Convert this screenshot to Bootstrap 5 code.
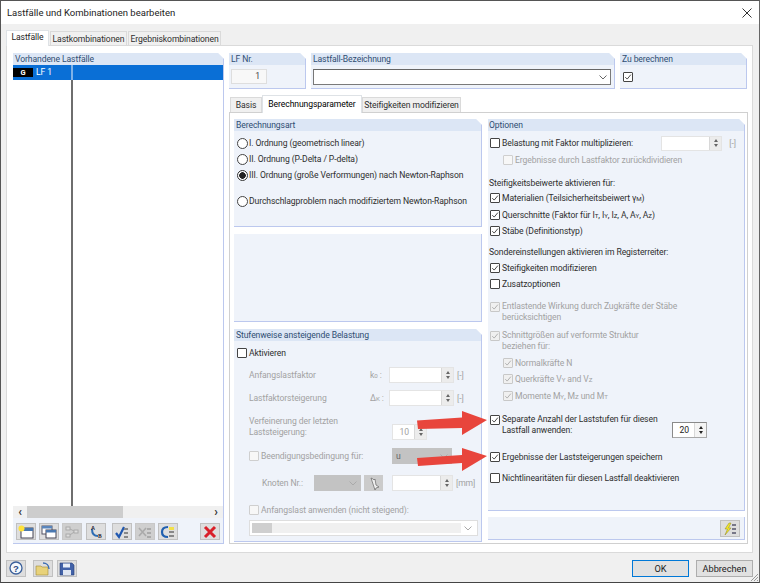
<!DOCTYPE html>
<html lang="de">
<head>
<meta charset="utf-8">
<title>Lastfälle und Kombinationen bearbeiten</title>
<link rel="stylesheet" href="https://cdn.jsdelivr.net/npm/bootstrap@5.3.0/dist/css/bootstrap.min.css">
<style>
html,body{margin:0;padding:0;background:#f0f0f0}
body{font-family:Roboto,"Liberation Sans",sans-serif;font-size:8.6px;letter-spacing:-.1px;line-height:11px;color:#2e2e2e}
.dlg{width:760px;height:583px;border:1px solid #555;border-right-color:#666;border-bottom-color:#444;background:#f0f0f0;overflow:hidden}
.ttl{height:23px;background:#fff;padding:0 7px 0 6px;font-size:9.5px;letter-spacing:0;color:#222}
.bodyw{padding:6px 0 0 5px}
.otabs{border:0;height:15px;gap:1px}
.otabs .nav-link{font-size:8.6px;line-height:11px;color:#2e2e2e;background:#f0f0f0;border:1px solid #dadada;border-bottom:0;border-radius:0;padding:2px 0 0;height:14px;margin-top:1px;white-space:nowrap;text-align:center}
.otabs .nav-link.active{background:#fff;margin-top:0;height:16px;padding:1px 0 0;position:relative;z-index:2;color:#222}
.ot1{width:43px}.ot2{width:77px}.ot3{width:93px}
.opanel{width:747px;height:508px;background:#fff;border:1px solid #dadada;padding:7px 0 0 6px}
.grp{background:#eff3fa;border-right:1px solid #bcc8ee;border-bottom:1px solid #bcc8ee;clip-path:polygon(0 0,calc(100% - 6px) 0,100% 6px,100% 100%,0 100%)}
.grph{background:#dce6f5;height:12px;line-height:12px;padding-left:2px;color:#2f4d72;white-space:nowrap;font-size:8.6px}
.go>.grph{padding-left:1px}
.lgrp{width:211px;height:491px}
.rcol{width:519px;margin-left:5px}
.topr{height:36px;gap:5px}
.g1{width:77px}.g2{width:304px}.g3{width:127px}
.inp1{width:36px;height:15px;margin:4px 0 0 2px;background:#f8f8f8;border:1px solid #dedede;text-align:right;padding:1px 6px;line-height:11px;color:#444}
.cmb{width:298px;height:16px;margin:4px 0 0 2px;background:#fff;border:1px solid #7a7a7a;border-top-color:#666;border-left-color:#777;padding-right:3px}
.zchk{margin:7px 0 0 3px}
.itabs{border:0;height:17px;margin-top:6px;padding-left:1px}
.itabs .nav-link{color:#2e2e2e;background:#f0f0f0;border:1px solid #dadada;border-bottom:0;border-radius:0;padding:2px 0 0;margin-top:2px;height:15px;font-size:8.6px;line-height:11px;white-space:nowrap;text-align:center}
.itabs .nav-link.active{background:#fff;margin-top:0;height:18px;padding:3px 0 0;position:relative;z-index:2}
.it1{width:32px}.it2{width:100px}.it3{width:99px}
.ipanel{width:519px;height:432px;background:#fff;border:1px solid #d0d0d0;padding:6px 0 0 4px}
.lcol{width:248px}
.ropt{width:257px;margin-left:6px}
.gb{height:108px}.ge{height:88px;margin-top:7px;clip-path:none}.gs{height:213px;margin-top:7px}
.go{height:392px}.gx{height:23px;margin-top:6px;clip-path:none;padding:3px 1px 0 0}
.rw{height:14px;padding-left:3px;white-space:nowrap}
.rd{height:16px;padding-left:15px;white-space:nowrap}
.dbl{height:24px;padding-left:3px;white-space:nowrap}
.go .rw,.go .dbl{padding-left:2px}
.go .rw.ind{padding-left:15px}
.t1{margin-top:1px}.t2{margin-top:2px}.t3{margin-top:3px}.t5{margin-top:5px}.t7{margin-top:7px}.t8{margin-top:8px}.t9{margin-top:9px}.t10{margin-top:10px}.t11{margin-top:11px}.t12{margin-top:12px}
.ind{padding-left:15px}
.go .rw.lbx{padding-left:1px}
.dis{color:#a2a2a2}
.form-check-input.bx{width:10px;height:10px;margin:0 2px 0 0;flex:none;float:none;background-color:#fff;border:1px solid #444;border-radius:1px;opacity:1;box-shadow:none}
.form-check-input.bx:checked[type=checkbox]{background-color:#fff;border-color:#444;background-size:100% 100%;background-image:url("data:image/svg+xml,%3Csvg xmlns='http://www.w3.org/2000/svg' viewBox='0 0 10 10'%3E%3Cpath d='M1.6 5.2 4 7.6 8.6 2' fill='none' stroke='%23333' stroke-width='1.1'/%3E%3C/svg%3E")}
.form-check-input.bx:disabled{border-color:#cfcfcf;background-color:#f7f7f7}
.form-check-input.bx:disabled:checked[type=checkbox]{border-color:#c8c8c8;background-color:#f0f0f0;background-image:url("data:image/svg+xml,%3Csvg xmlns='http://www.w3.org/2000/svg' viewBox='0 0 10 10'%3E%3Cpath d='M1.6 5.2 4 7.6 8.6 2' fill='none' stroke='%23a8a8a8' stroke-width='1.1'/%3E%3C/svg%3E")}
.form-check-input.chktop{margin-top:1px}
.form-check-input.rb{width:11px;height:11px;margin:0 1px 0 0;flex:none;background-color:#fff;border:1px solid #444;box-shadow:none}
.form-check-input.rb:checked[type=radio]{background-color:#fff;border-color:#333;background-image:radial-gradient(circle,#222 0 3px,transparent 3.6px)}
.sp{height:16px;background:#fff;border:1px solid #e4e4e4;flex:none}
.spv{flex:1 1 auto;text-align:right;line-height:14px;padding-right:5px}
.spa{width:12px;background:#ececec;border-left:1px solid #d8d8d8;justify-content:center;gap:2px}
.spa i{display:block;width:0;height:0;margin:0 auto;border-left:2.5px solid transparent;border-right:2.5px solid transparent}
.spa i.up{border-bottom:3px solid #666}
.spa i.dn{border-top:3px solid #666}
.sp.act{border:1px solid #a8a8a8;border-top-color:#8a8a8a;border-left-color:#8a8a8a;color:#222}
.sp.act .spa{background:#f4f4f4}
.sp.act .spa i.up{border-bottom-color:#222}.sp.act .spa i.dn{border-top-color:#222}
.spend{margin-right:37px}
.w65{width:65px}.w61{width:61px}.w35{width:35px}
.s15{height:15px}
.lb1{width:121px}.lb2{width:19px}
.u{margin-left:3px}
.uend{margin-left:7px;margin-right:8px}
.vf{white-space:normal;width:143px;line-height:10.5px}
.bdg{width:131px}
.knl{margin-left:13px;width:52px}
.gcm{background:#c3c3c3;height:16px;width:60px;padding:0 4px;color:#666;flex:none}
.gcm2{width:47px;justify-content:flex-end}
.gbtn{width:19px;height:16px;background:#cbcbcb;margin:0 9px 0 3px;flex:none}
.wcmb{width:229px;height:16px;background:#fff;border:1px solid #dedede;margin-left:15px;padding:2px}
.wfill{flex:1 1 auto;background:#f0f0f0;height:100%}
.wfill b{display:block;width:20px;height:100%;background:#cfcfcf}
.wch{width:14px;flex:none}
.lst{height:441px;background:#fff}
.lc1{width:60px;border-right:2px solid #6e6e6e;flex:none}
.lc2{flex:1 1 auto}
.sel{height:15px;background:#0a6fd6;color:#fff}
.lc1 .sel{margin-right:-2px;border-right:2px solid #7fb2e8;width:60px}
.gtag{width:20px;height:9px;background:#000;color:#fff;text-align:center;line-height:9px;font-size:7.5px;font-weight:700;margin-right:3px;flex:none}
.sbar{height:12px;background:#f0f0f0}
.sarr{width:14px;text-align:center;flex:none;font-weight:700;font-size:12px;color:#333;line-height:10px}
.thumb{width:96px;height:100%;background:#cdcdcd;flex:none}
.tbar{height:24px;padding:5px 0 0 3px}
.tb{width:20px;height:17px;background:#dedede;border:1px solid #c0c0c0;padding:0;margin-right:3px;flex:none;display:flex;align-items:center;justify-content:center;border-radius:0}
.tb.off{background:#cfcfcf;border-color:#c8c8c8}
.m1{margin-left:1px}.m3{margin-left:3px}
.fb2{margin-left:4px}.fb3{margin-left:1px}
.fbar{height:29px;padding:7px 6px 0 0}
.ok{width:57px;height:17px;background:#e1e1e1;border:1.5px solid #0078d7;border-radius:0;padding:0;font-size:9.2px;line-height:13px;color:#222}
.ab{width:57px;height:17px;background:#e1e1e1;border:1px solid #adadad;border-radius:0;padding:0;font-size:9.2px;line-height:14px;color:#222;margin-left:7px}
.ovl{position:absolute;left:0;top:0;pointer-events:none;z-index:5}
.grip{position:absolute;right:0;bottom:0}
.lmr{margin-right:3px}
sub.sb{font-size:72%;bottom:-.1em;text-transform:uppercase}
</style>
</head>
<body>
<div class="dlg d-flex flex-column position-relative">
  <div class="ttl d-flex align-items-center justify-content-between">
    <span>Lastfälle und Kombinationen bearbeiten</span>
    <svg width="10" height="10" viewBox="0 0 10 10"><path d="M.5.5l9 9M9.5.5l-9 9" stroke="#333" stroke-width="1"/></svg>
  </div>
  <div class="bodyw flex-grow-1">
    <ul class="nav nav-tabs otabs">
      <li class="nav-item"><a class="nav-link active ot1" href="#">Lastfälle</a></li>
      <li class="nav-item"><a class="nav-link ot2" href="#">Lastkombinationen</a></li>
      <li class="nav-item"><a class="nav-link ot3" href="#">Ergebniskombinationen</a></li>
    </ul>
    <div class="opanel d-flex">
      <div class="grp lgrp d-flex flex-column">
        <div class="grph">Vorhandene Lastfälle</div>
        <div class="lst d-flex">
          <div class="lc1"><div class="sel d-flex align-items-center"><span class="gtag">G</span>LF 1</div></div>
          <div class="lc2"><div class="sel"></div></div>
        </div>
        <div class="sbar d-flex align-items-center">
          <div class="sarr">‹</div><div class="thumb"></div><div class="flex-grow-1"></div><div class="sarr">›</div>
        </div>
        <div class="tbar d-flex">
          <button class="tb" type="button"><svg width="16" height="14" viewBox="0 0 16 14"><rect x="3" y="3" width="12" height="10" fill="#fff" stroke="#445"/><rect x="3" y="3" width="12" height="3" fill="#4a78b0"/><circle cx="3.5" cy="3.5" r="3" fill="#ffe23a"/></svg></button>
          <button class="tb" type="button"><svg width="16" height="14" viewBox="0 0 16 14"><rect x="1" y="1" width="10" height="8" fill="#fff" stroke="#556"/><rect x="1" y="1" width="10" height="2.5" fill="#5a86bc"/><rect x="5" y="5" width="10" height="8" fill="#fff" stroke="#445"/><rect x="5" y="5" width="10" height="2.5" fill="#4a78b0"/></svg></button>
          <button class="tb off" type="button"><svg width="16" height="14" viewBox="0 0 16 14"><g fill="#ddd" stroke="#aaa"><rect x="2" y="2" width="4" height="3"/><rect x="2" y="9" width="4" height="3"/><rect x="10" y="5" width="4" height="3"/></g><path d="M6 4l4 2M6 10l4-3" stroke="#aaa" fill="none"/></svg></button>
          <button class="tb m1" type="button"><svg width="16" height="14" viewBox="0 0 16 14"><path d="M4 4c0 5 2 7 6 7" fill="none" stroke="#2c6cb4" stroke-width="2"/><text x="3" y="5" font-size="5.500" font-family="Liberation Sans" font-weight="700" fill="#223">A</text><text x="10" y="13" font-size="5.500" font-family="Liberation Serif" font-weight="700" fill="#223">B</text></svg></button>
          <button class="tb m3" type="button"><svg width="16" height="14" viewBox="0 0 16 14"><path d="M2 8l3 4 5-10" fill="none" stroke="#2058b0" stroke-width="2.2"/><path d="M10 3h4v2h-4zM10 7h4v2h-4zM10 11h4v2h-4z" fill="#888"/></svg></button>
          <button class="tb off" type="button"><svg width="16" height="14" viewBox="0 0 16 14"><path d="M2 3l7 8M9 3l-7 8" stroke="#aaa" stroke-width="1.6"/><path d="M10 3h4v2h-4zM10 7h4v2h-4zM10 11h4v2h-4z" fill="#aaa"/></svg></button>
          <button class="tb" type="button"><svg width="16" height="14" viewBox="0 0 16 14"><path d="M8 2C3 2 2 5 2 7s1 5 6 5" fill="none" stroke="#2060b0" stroke-width="2.2"/><path d="M9 2h5v3H9z" fill="#f2e14a"/><path d="M9 6h5v2H9zM9 10h5v2H9z" fill="#888"/></svg></button>
          <button class="tb ms-auto lmr" type="button"><svg width="16" height="14" viewBox="0 0 16 14"><path d="M3 2l10 10M13 2L3 12" stroke="#d9202a" stroke-width="3"/></svg></button>
        </div>
      </div>
      <div class="rcol">
        <div class="topr d-flex">
          <div class="grp g1"><div class="grph">LF Nr.</div><div class="inp1">1</div></div>
          <div class="grp g2"><div class="grph">Lastfall-Bezeichnung</div>
            <div class="cmb d-flex align-items-center justify-content-end"><svg width="8" height="5" viewBox="0 0 8 5"><path d="M.5.5 4 4 7.500.5" fill="none" stroke="#666"/></svg></div></div>
          <div class="grp g3"><div class="grph">Zu berechnen</div><div class="zchk d-flex"><input class="form-check-input bx" type="checkbox" checked aria-label="Zu berechnen"></div></div>
        </div>
        <ul class="nav nav-tabs itabs">
          <li class="nav-item"><a class="nav-link it1" href="#">Basis</a></li>
          <li class="nav-item"><a class="nav-link active it2" href="#">Berechnungsparameter</a></li>
          <li class="nav-item"><a class="nav-link it3" href="#">Steifigkeiten modifizieren</a></li>
        </ul>
        <div class="ipanel d-flex">
          <div class="lcol">
            <div class="grp gb">
              <div class="grph">Berechnungsart</div>
              <div class="rw t5 d-flex align-items-center"><input class="form-check-input rb" type="radio" name="art" aria-label="I"><span>I. Ordnung (geometrisch linear)</span></div>
              <div class="rw t2 d-flex align-items-center"><input class="form-check-input rb" type="radio" name="art" aria-label="II"><span>II. Ordnung (P-Delta / P-delta)</span></div>
              <div class="rw t2 d-flex align-items-center"><input class="form-check-input rb" type="radio" name="art" checked aria-label="III"><span>III. Ordnung (große Verformungen) nach Newton-Raphson</span></div>
              <div class="rw t12 d-flex align-items-center"><input class="form-check-input rb" type="radio" name="art" aria-label="D"><span>Durchschlagproblem nach modifiziertem Newton-Raphson</span></div>
            </div>
            <div class="grp ge"></div>
            <div class="grp gs">
              <div class="grph">Stufenweise ansteigende Belastung</div>
              <div class="rw t5 d-flex align-items-center"><input class="form-check-input bx" type="checkbox" aria-label="Aktivieren"><span>Aktivieren</span></div>
              <div class="rd t7 d-flex align-items-center dis"><span class="lb1">Anfangslastfaktor</span><span class="lb2">k<sub class="sb">0</sub> :</span>
                <div class="sp w65 d-flex"><div class="spv"></div><div class="spa d-flex flex-column"><i class="up"></i><i class="dn"></i></div></div><span class="u">[-]</span></div>
              <div class="rd t7 d-flex align-items-center dis"><span class="lb1">Lastfaktorsteigerung</span><span class="lb2">Δ<sub class="sb">k</sub> :</span>
                <div class="sp w65 d-flex"><div class="spv"></div><div class="spa d-flex flex-column"><i class="up"></i><i class="dn"></i></div></div><span class="u">[-]</span></div>
              <div class="dbl ind t10 d-flex dis"><span class="vf">Verfeinerung der letzten<br>Laststeigerung:</span>
                <div class="sp w35 d-flex align-self-end"><div class="spv">10</div><div class="spa d-flex flex-column"><i class="up"></i><i class="dn"></i></div></div></div>
              <div class="rd t8 d-flex align-items-center dis"><input class="form-check-input bx" type="checkbox" disabled aria-label="Beendigung"><span class="bdg">Beendigungsbedingung für:</span>
                <div class="gcm d-flex align-items-center justify-content-between"><span>u</span><svg width="8" height="5" viewBox="0 0 8 5"><path d="M.5.5 4 4 7.500.5" fill="none" stroke="#aaa"/></svg></div></div>
              <div class="rd t11 d-flex align-items-center dis"><span class="knl">Knoten Nr.:</span>
                <div class="gcm gcm2 d-flex align-items-center"><svg width="8" height="5" viewBox="0 0 8 5"><path d="M.5.5 4 4 7.500.5" fill="none" stroke="#aaa"/></svg></div>
                <div class="gbtn d-flex align-items-center justify-content-center"><svg width="12" height="13" viewBox="0 0 12 13"><path d="M3 1l2 1 1 1 1-1 1 6 3 2-3 1-1 2-3-9z" fill="#eee" stroke="#666" stroke-width=".7"/></svg></div>
                <div class="sp w61 d-flex"><div class="spv"></div><div class="spa d-flex flex-column"><i class="up"></i><i class="dn"></i></div></div><span class="u">[mm]</span></div>
              <div class="rd t11 d-flex align-items-center dis"><input class="form-check-input bx" type="checkbox" disabled aria-label="Anfangslast"><span>Anfangslast anwenden (nicht steigend):</span></div>
              <div class="wcmb t2 d-flex align-items-center"><div class="wfill"><b></b></div><div class="wch d-flex justify-content-center"><svg width="8" height="5" viewBox="0 0 8 5"><path d="M.5.5 4 4 7.500.5" fill="none" stroke="#aaa"/></svg></div></div>
            </div>
          </div>
          <div class="ropt">
            <div class="grp go">
              <div class="grph">Optionen</div>
              <div class="rw t5 d-flex align-items-center"><input class="form-check-input bx" type="checkbox" aria-label="Belastung"><span>Belastung mit Faktor multiplizieren:</span>
                <div class="sp s15 w61 d-flex ms-auto dis"><div class="spv"></div><div class="spa d-flex flex-column"><i class="up"></i><i class="dn"></i></div></div><span class="uend dis">[-]</span></div>
              <div class="rw ind t3 d-flex align-items-center dis"><input class="form-check-input bx" type="checkbox" disabled aria-label="Ergebnisse"><span>Ergebnisse durch Lastfaktor zurückdividieren</span></div>
              <div class="rw t9 d-flex align-items-center lbx">Steifigkeitsbeiwerte aktivieren für:</div>
              <div class="rw t1 d-flex align-items-center"><input class="form-check-input bx" type="checkbox" checked aria-label="Materialien"><span>Materialien (Teilsicherheitsbeiwert γ<sub class="sb">M</sub>)</span></div>
              <div class="rw t3 d-flex align-items-center"><input class="form-check-input bx" type="checkbox" checked aria-label="Querschnitte"><span>Querschnitte (Faktor für I<sub class="sb">T</sub>, I<sub class="sb">Y</sub>, I<sub class="sb">Z</sub>, A, A<sub class="sb">Y</sub>, A<sub class="sb">Z</sub>)</span></div>
              <div class="rw t2 d-flex align-items-center"><input class="form-check-input bx" type="checkbox" checked aria-label="Stäbe"><span>Stäbe (Definitionstyp)</span></div>
              <div class="rw t7 d-flex align-items-center lbx">Sondereinstellungen aktivieren im Registerreiter:</div>
              <div class="rw t2 d-flex align-items-center"><input class="form-check-input bx" type="checkbox" checked aria-label="Steifigkeiten"><span>Steifigkeiten modifizieren</span></div>
              <div class="rw t2 d-flex align-items-center"><input class="form-check-input bx" type="checkbox" aria-label="Zusatz"><span>Zusatzoptionen</span></div>
              <div class="dbl t10 d-flex dis"><input class="form-check-input bx chktop" type="checkbox" checked disabled aria-label="Entlastende"><span>Entlastende Wirkung durch Zugkräfte der Stäbe<br>berücksichtigen</span></div>
              <div class="dbl t5 d-flex dis"><input class="form-check-input bx chktop" type="checkbox" checked disabled aria-label="Schnitt"><span>Schnittgrößen auf verformte Struktur<br>beziehen für:</span></div>
              <div class="rw ind t2 d-flex align-items-center dis"><input class="form-check-input bx" type="checkbox" checked disabled aria-label="N"><span>Normalkräfte N</span></div>
              <div class="rw ind t2 d-flex align-items-center dis"><input class="form-check-input bx" type="checkbox" checked disabled aria-label="Q"><span>Querkräfte V<sub class="sb">Y</sub> and V<sub class="sb">Z</sub></span></div>
              <div class="rw ind t3 d-flex align-items-center dis"><input class="form-check-input bx" type="checkbox" checked disabled aria-label="M"><span>Momente M<sub class="sb">Y</sub>, M<sub class="sb">Z</sub> und M<sub class="sb">T</sub></span></div>
              <div class="dbl t11 d-flex align-items-start"><input class="form-check-input bx chktop" type="checkbox" checked aria-label="Separate"><span>Separate Anzahl der Laststufen für diesen<br>Lastfall anwenden:</span>
                <div class="sp act w35 d-flex ms-auto spend align-self-end"><div class="spv">20</div><div class="spa d-flex flex-column"><i class="up"></i><i class="dn"></i></div></div></div>
              <div class="rw t12 d-flex align-items-center"><input class="form-check-input bx" type="checkbox" checked aria-label="Ergebnisse speichern"><span>Ergebnisse der Laststeigerungen speichern</span></div>
              <div class="rw t7 d-flex align-items-center"><input class="form-check-input bx" type="checkbox" aria-label="Nichtlinear"><span>Nichtlinearitäten für diesen Lastfall deaktivieren</span></div>
            </div>
            <div class="grp gx d-flex justify-content-end">
              <button class="tb" type="button"><svg width="16" height="14" viewBox="0 0 16 14"><path d="M7 1 3 7h2.500L3 13l6-7H6.500L9 1z" fill="#f4e72a" stroke="#8a8420" stroke-width=".5"/><path d="M10 2h4v2h-4zM10 6h4v2h-4zM10 10h4v2h-4z" fill="#778"/></svg></button>
            </div>
          </div>
        </div>
      </div>
    </div>
    <div class="fbar d-flex align-items-start">
      <button class="tb" type="button"><svg width="16" height="15" viewBox="0 0 16 15"><circle cx="8" cy="7" r="6" fill="#f4f8fc" stroke="#3a5f9a" stroke-width="1.300"/><text x="8" y="10.500" text-anchor="middle" font-size="9.500" font-weight="700" font-family="Liberation Sans" fill="#2a4a85">?</text></svg></button>
      <button class="tb fb2" type="button"><svg width="16" height="14" viewBox="0 0 16 14"><path d="M1 4h5l1 1h6v8H1z" fill="#e8d27a" stroke="#a08a3a" stroke-width=".6"/><path d="M8 1c3 0 6 2 6 6" fill="none" stroke="#3a6cb0" stroke-width="1.400"/></svg></button>
      <button class="tb fb3" type="button"><svg width="16" height="14" viewBox="0 0 16 14"><path d="M1 1h12l2 2v10H1z" fill="#4262a8" stroke="#2a3f75" stroke-width=".6"/><rect x="4" y="1.500" width="7" height="4" fill="#e8eef8"/><rect x="4" y="8" width="8" height="5" fill="#dfe6f2"/></svg></button>
      <button class="btn ok ms-auto" type="button">OK</button>
      <button class="btn ab" type="button">Abbrechen</button>
    </div>
  </div>
  <svg class="grip" width="10" height="10" viewBox="0 0 10 10"><path d="M9 2 2 9M9 5 5 9M9 8 8 9" stroke="#999"/></svg>
  <svg class="ovl" width="758" height="581" viewBox="1 1 758 581">
    <path d="M417 420.500 462 417.500V411L487 420 462 435V428L418 429z" fill="#e8453c"/>
    <path d="M417 458 462 455V448L487 456 462 471V463L418 466z" fill="#e8453c"/>
  </svg>
</div>
<script src="https://cdn.jsdelivr.net/npm/bootstrap@5.3.0/dist/js/bootstrap.bundle.min.js"></script>
</body>
</html>
